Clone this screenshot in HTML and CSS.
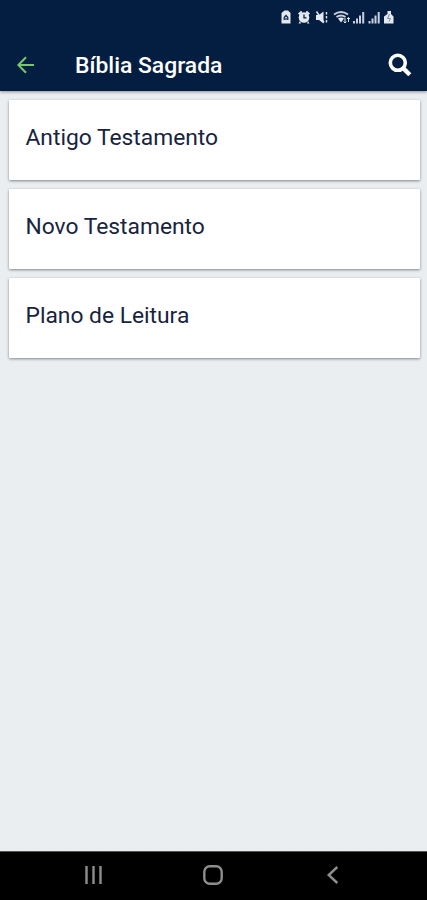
FILE: index.html
```html
<!DOCTYPE html>
<html lang="pt-BR">
<head>
    <meta charset="UTF-8">
    <meta name="viewport" content="width=device-width, initial-scale=1.0">
    <title>Bíblia Sagrada</title>
    <link rel="stylesheet" href="styles.css">
</head>
<body>

    <header class="header">
        <div class="status-bar">
            <svg width="116" height="16" viewBox="0 0 116 16" fill="#e4e9f0">
                <!-- battery saver -->
                <path d="M4.500 1.500h3.500l2.500 2.500v10.500h-9V4z"/>
                <path d="M4.200 11V8.500L6 6.500l1.800 2V11M6 9v2" fill="none" stroke="#041e42" stroke-width="1.200"/>
                <!-- alarm -->
                <circle cx="24" cy="8.500" r="5.300"/>
                <path d="M18 4.500l3-2.700 1.500 1.500-3 2.700zM30 4.500l-3-2.700-1.500 1.500 3 2.700zM20 12l-1.500 2.500h2.500zM28 12l1.500 2.500H27z"/>
                <path d="M24 5.500v3.300h2.500" fill="none" stroke="#041e42" stroke-width="1.300"/>
                <!-- mute -->
                <path d="M36 6h3l4.500-3.500v12L39 11h-3z"/>
                <path d="M36.500 2.500l7.500 11M46.500 3v2.500M46.500 7v2.500M46.500 11v2.500" stroke="#e4e9f0" stroke-width="1.400"/>
                <!-- wifi -->
                <path d="M54 5.500q7-5 14 0M56.500 8q4.500-3.200 9 0" fill="none" stroke="#c7d0dc" stroke-width="2"/>
                <path d="M58 9.500q3-2 6 0l-3 4z"/>
                <path d="M65 9v5M63.500 12.500l1.500 1.500 1.300-1.500M68.500 13V8.500M67 10l1.500-1.500L70 10" fill="none" stroke="#e4e9f0"/>
                <!-- signal -->
                <path d="M73 12h2v2.500h-2zM76 9.500h2v5h-2zM79 6.500h2v8h-2zM82.200 3h2v11.500h-2z" fill="#c7d0dc"/>
                <path d="M88.500 12h2v2.500h-2zM91.500 9.500h2v5h-2zM94.500 6.500h2v8h-2zM97.700 3h2v11.500h-2z" fill="#c7d0dc"/>
                <!-- battery -->
                <path d="M107.500 2h3.500v3l2.500 2.500v7h-9.500v-7l3.500-2.500z"/>
                <path d="M109.500 5l-2 4.500h3l-1.500 3" fill="none" stroke="#7f8da1"/>
            </svg>
        </div>
        <div class="toolbar">
            <svg class="back" width="18" height="18" viewBox="0 0 18 18">
                <path d="M17 9H1.500M9 1.200L1.300 9 9 16.800"/>
            </svg>
            <h1>Bíblia Sagrada</h1>
            <svg class="search" width="24" height="24" viewBox="0 0 24 24">
                <circle cx="9.800" cy="9.800" r="7.500"/>
                <path class="handle" d="M15.500 15.500l6.300 6.300"/>
            </svg>
        </div>
    </header>

    <main class="list">
        <div class="card">Antigo Testamento</div>
        <div class="card">Novo Testamento</div>
        <div class="card">Plano de Leitura</div>
    </main>

    <nav class="nav-bar">
        <svg width="20" height="20" viewBox="0 0 20 20">
            <path d="M3.500 1v18M10.500 1v18M17.500 1v18"/>
        </svg>
        <svg width="20" height="20" viewBox="0 0 20 20">
            <rect x="1.300" y="1.300" width="17.400" height="17.400" rx="5.500"/>
        </svg>
        <svg width="20" height="20" viewBox="0 0 20 20">
            <path d="M14.300 2L5.700 10l8.600 8"/>
        </svg>
    </nav>

</body>
</html>
```
FILE: styles.css
```css
* {
    margin: 0;
    padding: 0;
    box-sizing: border-box;
}

body {
    display: flex;
    flex-direction: column;
    height: 100vh;
    background-color: #eaeef1;
    font-family: Roboto, sans-serif;
    overflow: hidden;
}

svg {
    display: block;
    flex: none;
}

/* Header */
.header {
    height: 91px;
    background-color: #041e42;
    color: white;
    box-shadow: 0 1px 3px rgba(0, 0, 0, 0.4);
}

.status-bar {
    display: flex;
    justify-content: flex-end;
    height: 38px;
    padding: 9px 31px 0 0;
}

.toolbar {
    display: flex;
    align-items: center;
    height: 54px;
    padding: 0 15px 0 17px;
}

.back {
    fill: none;
    stroke: #76c968;
    stroke-width: 2;
}

.toolbar h1 {
    flex: 1;
    margin-left: 40px;
    font-size: 22.9px;
    font-weight: 500;
}

.search {
    fill: none;
    stroke: white;
    stroke-width: 3.6;
}

.search .handle {
    stroke-width: 4.4;
}

/* Cards */
.list {
    display: flex;
    flex: 1;
    flex-direction: column;
    gap: 9px;
    padding: 9px 7px 0 9px;
}

.card {
    height: 80px;
    padding: 24px 16.500px;
    border-radius: 1px;
    background-color: white;
    box-shadow: 0 1px 3px rgba(0, 0, 0, 0.45);
    color: #172440;
    font-size: 22.8px;
    line-height: 28px;
}

/* Android navigation */
.nav-bar {
    display: flex;
    align-items: center;
    justify-content: center;
    gap: 100px;
    height: 49px;
    padding: 0 2px 2px 0;
    border-top: 1px solid #555;
    background-color: black;
}

.nav-bar svg {
    fill: none;
    stroke: #8e8e8e;
    stroke-width: 2.4;
}
```
